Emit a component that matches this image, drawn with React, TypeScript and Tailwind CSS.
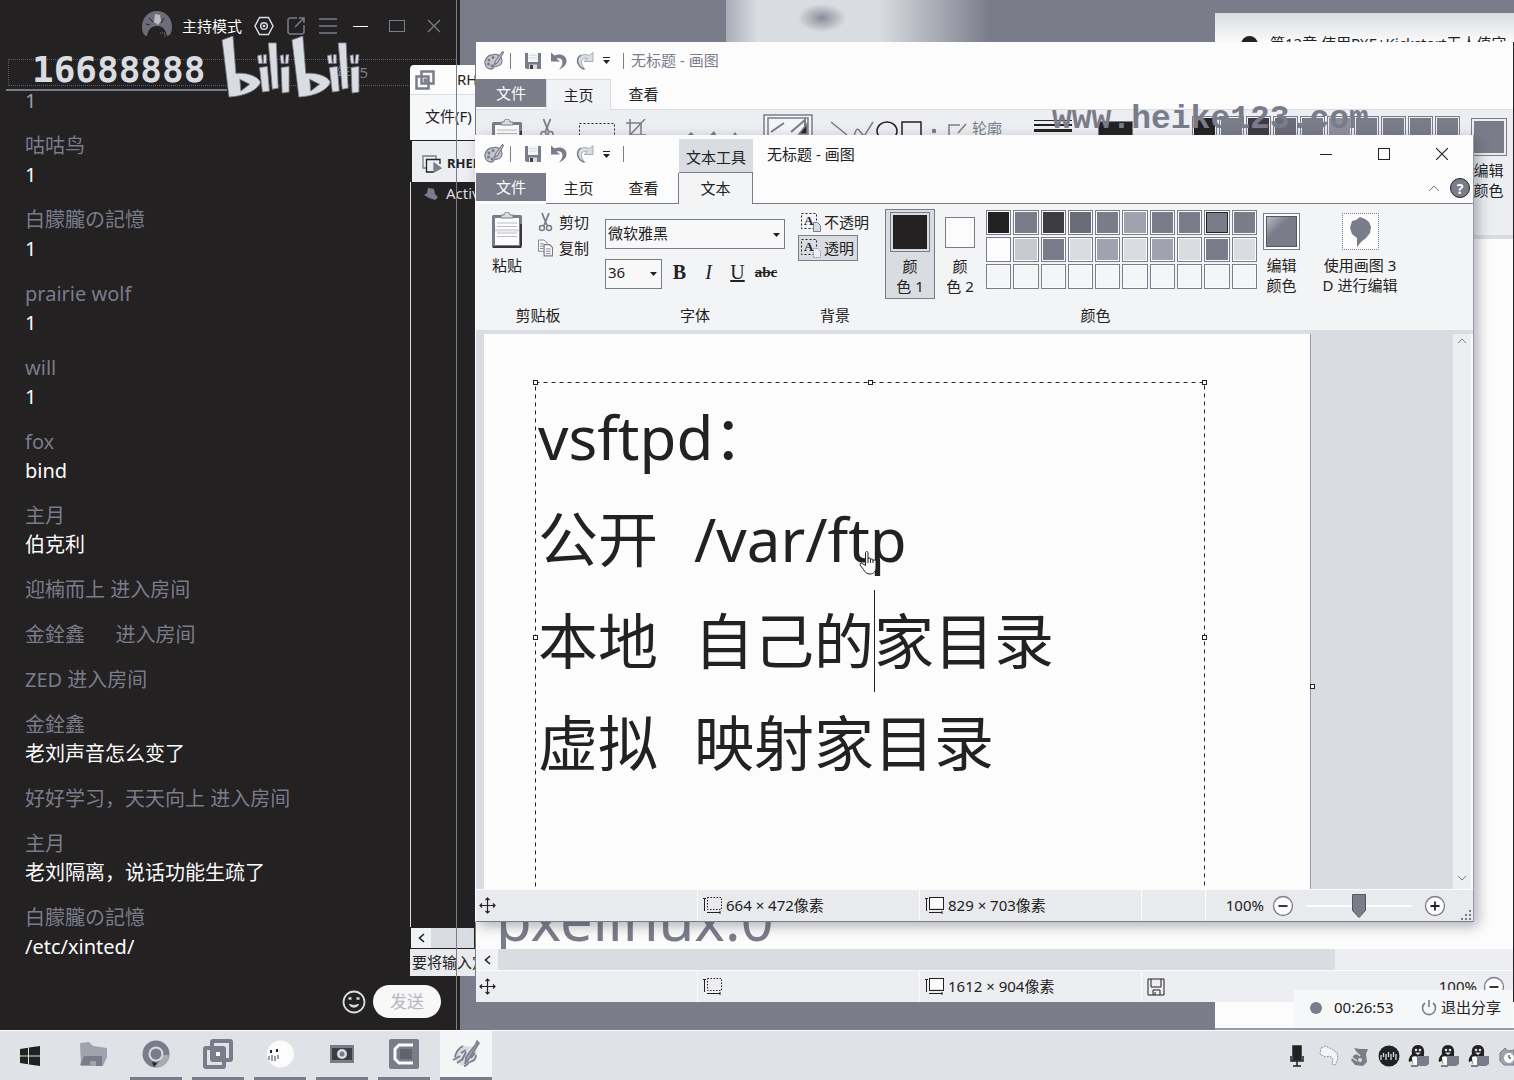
import React from "react";

type SvgProps = { className?: string };

const DARK = "#232122";
const GRAY = "#7b7c8a";
const LIGHT = "#d9dce1";

/* ---------- icons ---------- */

function PaletteIcon({ className = "" }: SvgProps) {
  return (
    <svg viewBox="0 0 20 20" className={className} aria-hidden="true">
      <path d="M7 4C3 5 .5 9 1 12.500c.5 3 3 5.500 6.500 5.500 2 0 2-2 3.500-2.500s4 .5 6-2.500c1.500-2.500 1-6-1-8S10.500 3 7 4z" fill="#c3c6ce" stroke={GRAY} strokeWidth="1.300" />
      <circle cx="5" cy="9" r="1.500" fill={GRAY} />
      <circle cx="9" cy="6.500" r="1.500" fill={GRAY} />
      <circle cx="4.500" cy="13" r="1.500" fill={GRAY} />
      <circle cx="8" cy="15" r="1.400" fill={GRAY} />
      <path d="M18.500 .5l-7 9.500-1.500 4 3.500-2.500 6-10z" fill={LIGHT} stroke={GRAY} strokeWidth="1.200" />
    </svg>
  );
}

function PaintAppIcon({ className = "" }: SvgProps) {
  return (
    <svg viewBox="0 0 28 28" className={className} aria-hidden="true">
      <path d="M11 6C6 8 2 13 3 18c1 5 5 8 9 8 3 0 3-3 5-4s6 0 7-4 1-8-1-11" fill={LIGHT} />
      <path d="M3 17c1-5 4-9 8-11M1 20l7-4M5 23l6-4M9 13l5-3M12 26c4 0 3-3 6-4s6-2 6-7" fill="none" stroke={GRAY} strokeWidth="1.800" />
      <path d="M25 1l2 2-8 13-6 8 1-7L24 4z" fill="#a0a2ad" stroke={GRAY} strokeWidth="1.500" />
      <path d="M10 20l4-8M19 18l4-5" stroke={GRAY} strokeWidth="1.800" />
    </svg>
  );
}

function SaveIcon({ className = "" }: SvgProps) {
  return (
    <svg viewBox="0 0 18 18" className={className} aria-hidden="true">
      <path d="M1 1h16v16H2.500L1 15.500z" fill={GRAY} />
      <path d="M4 1h10v9H4z" fill="#f4f5f7" />
      <path d="M5 3.500h8M5 6h8" stroke={LIGHT} />
      <path d="M5 12.500h8V17H5z" fill={LIGHT} />
      <path d="M6 13h3v4H6z" fill="#3d3c42" />
    </svg>
  );
}

function UndoIcon({ className = "" }: SvgProps) {
  return (
    <svg viewBox="0 0 18 18" className={className} aria-hidden="true">
      <path d="M1 .5v9h9L6.500 6.500c3.500-1 6 .5 6 4 0 2.500-1.500 4.500-3.500 7 5-2 7.500-5 7.500-8.500 0-5-5.500-8-12-5.500z" fill={GRAY} />
    </svg>
  );
}

function RedoIcon({ className = "" }: SvgProps) {
  return (
    <svg viewBox="0 0 18 18" className={className} aria-hidden="true">
      <path d="M17 .5v9H8l3.500-3c-3.500-1-6 .5-6 4 0 2.500 1.500 4.500 3.500 7-5-2-7.500-5-7.500-8.500 0-5 5.500-8 12-5.500z" fill={LIGHT} stroke="#a9abb5" />
      <path d="M5 3C2 5 1 8 2 11s3 5 6 6" fill="none" stroke={GRAY} strokeWidth="1.500" />
    </svg>
  );
}

function Caret({ className = "" }: SvgProps) {
  return (
    <svg viewBox="0 0 7 4" className={className} aria-hidden="true">
      <path d="M0 0h7L3.500 4z" fill={DARK} />
    </svg>
  );
}

function PasteIcon({ className = "" }: SvgProps) {
  return (
    <svg viewBox="0 0 30 36" className={className} aria-hidden="true">
      <rect x="0" y="3" width="30" height="33" rx="1.500" fill={GRAY} />
      <rect x="3" y="6" width="24" height="27" fill="#fcfcfc" />
      <path d="M9 6V3h3c0-4 6-4 6 0h3v3z" fill={LIGHT} stroke={GRAY} />
      <path d="M5 11h20M5 14.500h20M5 21h20M5 24.500h20" stroke="#b9bcc5" />
      <path d="M3 17h24v2.500H3z" fill={LIGHT} />
      <path d="M1 35h28M29 12v22" stroke={DARK} strokeWidth="1.500" />
    </svg>
  );
}

function ScissorsIcon({ className = "" }: SvgProps) {
  return (
    <svg viewBox="0 0 14 20" className={className} aria-hidden="true">
      <path d="M3.500 1l5 12.500M10.500 1l-5 12.500" stroke={GRAY} strokeWidth="1.800" fill="none" />
      <circle cx="3.500" cy="16" r="2.500" fill="none" stroke={GRAY} strokeWidth="1.500" />
      <circle cx="10.500" cy="16" r="2.500" fill="none" stroke={GRAY} strokeWidth="1.500" />
    </svg>
  );
}

function CopyIcon({ className = "" }: SvgProps) {
  return (
    <svg viewBox="0 0 16 18" className={className} aria-hidden="true">
      <path d="M.5.500h6l3 3v9h-9z" fill="#fcfcfc" stroke={GRAY} />
      <path d="M2 4.500h4M2 7h4M2 9.500h4" stroke={GRAY} />
      <path d="M6.500 5.500h6l3 3v9h-9z" fill="#fcfcfc" stroke={GRAY} strokeWidth="1.300" />
      <path d="M8.500 10h5M8.500 12.500h5M8.500 15h5" stroke={GRAY} />
    </svg>
  );
}

function TextBackIcon({ solid = false }: { solid?: boolean }) {
  return (
    <span className="relative block h-[19px] w-5 flex-none" aria-hidden="true">
      <svg viewBox="0 0 20 19" className="absolute inset-0 h-full w-full">
        <rect x=".5" y=".5" width="15" height="15" fill="none" stroke={DARK} strokeDasharray="2 2" />
        <path d="M12.500 9.500h4l3 3v6h-7z" fill={solid ? LIGHT : "#eceef1"} stroke={GRAY} strokeDasharray={solid ? "0" : "1 1"} />
      </svg>
      <span className="absolute left-[3px] top-0 font-['Liberation_Serif',serif] text-[13px] font-bold leading-4 text-[#232122]">A</span>
    </span>
  );
}

function MoveIcon({ className = "" }: SvgProps) {
  return (
    <svg viewBox="0 0 17 17" className={className} aria-hidden="true">
      <path d="M8.500 1v15M1 8.500h15M6.500 3l2-2 2 2M6.500 14l2 2 2-2M3 6.500l-2 2 2 2M14 6.500l2 2-2 2" fill="none" stroke={DARK} strokeWidth="1.200" />
    </svg>
  );
}

function SelectionSizeIcon({ className = "" }: SvgProps) {
  return (
    <svg viewBox="0 0 19 17" className={className} aria-hidden="true">
      <rect x="4.500" y=".5" width="14" height="12" fill="none" stroke={DARK} strokeDasharray="1.500 1.500" />
      <path d="M1.500 1v13M0 1.500h3M4 15.500h13M17 14v3" stroke={DARK} fill="none" />
    </svg>
  );
}

function CanvasSizeIcon({ className = "" }: SvgProps) {
  return (
    <svg viewBox="0 0 19 17" className={className} aria-hidden="true">
      <rect x="4.500" y=".5" width="14" height="12" fill="#fcfcfc" stroke={DARK} />
      <path d="M6 11.500h11" stroke={LIGHT} />
      <path d="M1.500 1v13M0 1.500h3M4 15.500h13M17 14v3" stroke={DARK} fill="none" />
    </svg>
  );
}

function RoundSign({ plus = false }: { plus?: boolean }) {
  return (
    <svg viewBox="0 0 22 22" className="h-[22px] w-[22px]" aria-hidden="true">
      <circle cx="11" cy="11" r="9.500" fill="#fcfcfc" stroke={GRAY} strokeWidth="1.300" />
      <path d={plus ? "M6.500 11h9M11 6.500v9" : "M6.500 11h9"} stroke={DARK} strokeWidth="1.800" />
    </svg>
  );
}

function PenguinIcon() {
  return (
    <svg viewBox="0 0 22 22" className="h-[22px] w-[22px]" aria-hidden="true">
      <path d="M4 9C3 3 6 0 10 0s7 3 6 9v4H4z" fill={DARK} />
      <path d="M4 9c-3 3-4 6-3 8l3-1 1 3 8-1V9z" fill={DARK} />
      <circle cx="8" cy="5" r="1.300" fill={LIGHT} />
      <circle cx="12" cy="5" r="1.300" fill={LIGHT} />
      <path d="M7 7.500h6l-3 2.500z" fill={LIGHT} />
      <path d="M4 12c2-1 5-1 6 1s0 6-2 7-4-2-4-8z" fill="#fcfcfc" />
      <path d="M9 11h12v8l-3 2H9z" fill={GRAY} />
      <path d="M3 21h7" stroke={GRAY} strokeWidth="2" />
    </svg>
  );
}

/* ---------- chat panel ---------- */

type Message = { name?: string; text?: string };

const messages: Message[] = [
  { text: "1" },
  { name: "咕咕鸟", text: "1" },
  { name: "白朦朧の記憶", text: "1" },
  { name: "prairie wolf", text: "1" },
  { name: "will", text: "1" },
  { name: "fox", text: "bind" },
  { name: "主月", text: "伯克利" },
  { name: "迎楠而上 进入房间" },
  { name: "金銓鑫\u3000  进入房间" },
  { name: "ZED 进入房间" },
  { name: "金銓鑫", text: "老刘声音怎么变了" },
  { name: "好好学习，天天向上 进入房间" },
  { name: "主月", text: "老刘隔离，说话功能生疏了" },
  { name: "白朦朧の記憶", text: "/etc/xinted/" },
];

function ChatPanel() {
  const iconButton = "flex h-8 w-8 items-center justify-center";
  return (
    <aside className="flex h-full w-[457px] flex-none flex-col border-r border-[#7b7c8a] bg-[#232122]">
      <header className="flex h-[52px] flex-none items-center pl-[142px]">
        <svg viewBox="0 0 30 30" className="h-[30px] w-[30px]" aria-hidden="true">
          <path d="M0 16C0 7 6 0 15 0s15 7 15 16c0 5-2 9-5 9-1-6-4-10-10-10S6 19 5 25c-3 0-5-4-5-9z" fill="#6c6d79" />
          <path d="M13 3l5 1 1 6-3 4-4-3z" fill="#b9bcc5" />
          <path d="M7 7l4 4M22 7l-3 5M4 13l4 1" stroke={DARK} />
          <path d="M18 22h5v4" fill="none" stroke={GRAY} strokeDasharray="1 1" />
        </svg>
        <span className="ml-[10px] text-[15px] leading-5 text-[#fcfcfc]">主持模式</span>
        <button className={"ml-[6px] " + iconButton} aria-label="设置">
          <svg viewBox="0 0 20 20" className="h-5 w-5" fill="none" stroke={LIGHT} strokeWidth="1.500">
            <path d="M5.500 1.500h9l4.500 8.500-4.500 8.500h-9L1 10z" />
            <circle cx="10" cy="10" r="3.300" />
            <circle cx="10" cy="10" r=".6" />
          </svg>
        </button>
        <button className={iconButton} aria-label="分享">
          <svg viewBox="0 0 20 20" className="h-5 w-5" fill="none" stroke={GRAY} strokeWidth="1.500">
            <path d="M11 2H3.500L2 3.500v13L3.500 18h13l1.500-1.500V9M13 2h5v5M18 2l-9 9" />
          </svg>
        </button>
        <button className={iconButton} aria-label="菜单">
          <svg viewBox="0 0 18 16" className="h-4 w-[18px]" stroke={GRAY} strokeWidth="1.600">
            <path d="M0 1h18M0 8h18M0 15h18" />
          </svg>
        </button>
        <button className={iconButton} aria-label="最小化">
          <span className="block h-px w-[15px] bg-[#fcfcfc]" />
        </button>
        <button className="flex h-8 w-[42px] items-center justify-center" aria-label="最大化">
          <span className="block h-3 w-4 border border-[#7b7c8a]" />
        </button>
        <button className={iconButton} aria-label="关闭">
          <svg viewBox="0 0 14 14" className="h-[14px] w-[14px]" stroke={GRAY} strokeWidth="1.300">
            <path d="M1 1l12 12M13 1L1 13" />
          </svg>
        </button>
      </header>
      <div className="flex h-[34px] flex-none flex-col justify-end pl-2">
        <div className="flex h-[27px] items-center justify-end border border-r-0 border-dotted border-[#5d5e69] pr-[88px] text-[15px] text-[#7b7c8a]">
          年15
        </div>
      </div>
      <ul className="flex flex-col gap-4 pl-[25px] text-[20px] leading-[29px]">
        {messages.map((m, i) => (
          <li key={i} className="flex flex-col">
            {m.name && <span className="whitespace-pre text-[#7b7c8a]">{m.name}</span>}
            {m.text && <span className={i === 0 ? "text-[#9a9ba6]" : "text-[#fcfcfc]"}>{m.text}</span>}
          </li>
        ))}
      </ul>
      <footer className="mt-auto flex items-center justify-end gap-[7px] pb-3 pr-[15px]">
        <button aria-label="表情">
          <svg viewBox="0 0 24 24" className="h-6 w-6" fill="none" stroke={LIGHT} strokeWidth="1.800">
            <circle cx="12" cy="12" r="10.500" />
            <path d="M7.500 14.500c1 3.500 8 3.500 9 0l-4.500 1z" fill={LIGHT} strokeWidth="1" />
            <path d="M6.500 8.500h3M14.500 8.500h3" strokeWidth="2.500" />
          </svg>
        </button>
        <button className="h-[33px] w-[68px] rounded-full bg-[#f8f8f9] text-[17px] text-[#b4b7bf]">发送</button>
      </footer>
    </aside>
  );
}

function BilibiliLogo({ className = "" }: SvgProps) {
  const half = (
    <>
      <path d="M0 4L11 0l3 38c9-1 22 2 25 9-3 8-15 14-32 15z" />
      <path d="M36 20l4-1 1 9-4 0zM42 19l3 0 0 9-3 0zM59 20l3-1 1 9-3 0zM65 19l3 0-1 9-3 0z" />
      <path d="M38 32l8-1 2 25-7 1zM47 7l8 0 2 46-6 1zM60 32l8-1 0 26-7 1z" />
    </>
  );
  return (
    <svg viewBox="0 0 142 63" className={className} role="img" aria-label="bilibili" fill={LIGHT} stroke={GRAY} strokeWidth=".8">
      {half}
      <g transform="translate(71 0)">{half}</g>
      <path d="M18 44l10 5-9 7zM89 44l10 5-9 7z" fill={DARK} />
    </svg>
  );
}

/* ---------- virtual machine window ---------- */

function VmWindow() {
  return (
    <section className="absolute bottom-[54px] left-[410px] top-[65px] flex w-[65px] flex-col overflow-hidden whitespace-nowrap rounded-tl bg-[#fcfcfc] text-[15px] text-[#232122]">
      <header className="flex h-[30px] flex-none items-center gap-[22px] border-b border-[#d9dce1] pl-[5px]">
        <svg viewBox="0 0 20 20" className="h-5 w-5 flex-none" fill="none" stroke={GRAY} strokeWidth="2.500">
          <rect x="6.500" y="1.500" width="12" height="12" />
          <rect x="1.500" y="6.500" width="12" height="12" />
          <rect x="9" y="9" width="3" height="3" fill={GRAY} strokeWidth="1" />
        </svg>
        <span>RHEL</span>
      </header>
      <div className="flex h-[45px] flex-none items-center bg-[#f6f7f8] pb-0.5 pl-[15px]">文件(F)</div>
      <div className="flex h-[42px] flex-none items-center gap-[5px] border-l-2 border-t border-[#232122] bg-[#eceef1] pl-[10px] pt-1">
        <svg viewBox="0 0 20 18" className="h-[18px] w-5 flex-none" fill="none" stroke={GRAY} strokeWidth="1.300">
          <path d="M4 13H1V1h13v3" />
          <path d="M12 17H4.500V4.500H18V9" stroke={DARK} />
          <path d="M12 8l7 5-7 4z" fill={GRAY} />
        </svg>
        <b className="text-[13px]">RHEL</b>
      </div>
      <div className="flex flex-1 items-start gap-2 border-l border-[#d9dce1] bg-[#232122] pl-[13px] text-[#d9dce1]">
        <svg viewBox="0 0 14 12" className="mt-[6px] h-3 w-[14px] flex-none" fill={GRAY}>
          <path d="M4 0l6 1 1 5 3 3-3 3-6-2-5-3 3-2z" />
        </svg>
        <span className="leading-[22px]">Activ</span>
      </div>
      <div className="flex h-[22px] flex-none items-center border border-[#232122] bg-[#d9dce1]">
        <button className="flex h-full w-5 items-center justify-center bg-[#f1f2f5]" aria-label="向左滚动">
          <svg viewBox="0 0 7 10" className="h-[10px] w-[7px]" fill="none" stroke={DARK} strokeWidth="1.600">
            <path d="M6 1L1.500 5 6 9" />
          </svg>
        </button>
      </div>
      <div className="flex h-[27px] flex-none items-center bg-[#e8eaed] pl-0.5">要将输入定</div>
    </section>
  );
}

/* ---------- paint ---------- */

function QuickAccess() {
  return (
    <div className="flex items-center pl-2">
      <PaletteIcon className="h-5 w-5" />
      <span className="ml-[6px] h-4 w-px bg-[#7b7c8a]" />
      <button className="ml-[13px]" aria-label="保存"><SaveIcon className="h-[18px] w-[18px]" /></button>
      <button className="ml-2" aria-label="撤消"><UndoIcon className="h-[18px] w-[18px]" /></button>
      <button className="ml-2" aria-label="重做"><RedoIcon className="h-[18px] w-[18px]" /></button>
      <button className="ml-[9px] flex flex-col items-center gap-0.5" aria-label="自定义快速访问工具栏">
        <span className="h-px w-[7px] bg-[#232122]" />
        <Caret className="h-1 w-[7px]" />
      </button>
      <span className="ml-[13px] h-4 w-px bg-[#7b7c8a]" />
    </div>
  );
}

const tabBase = "flex h-[31px] w-[65px] items-center justify-center";

function FileTab() {
  return <button className="h-7 w-[70px] flex-none bg-[#7b7c8a] text-[#fcfcfc]">文件</button>;
}

function StatusItem({ icon, children, className = "" }: { icon: React.ReactNode; children?: React.ReactNode; className?: string }) {
  return (
    <div className={"flex h-full items-center gap-1 border-l border-[#fcfcfc] pl-[5px] " + className}>
      {icon}
      <span>{children}</span>
    </div>
  );
}

function BackPaintWindow() {
  const swatches = ["bg-[#232122]", "bg-[#7b7c8a]", "bg-[#3d3c42]", "bg-[#6a6b77]", "bg-[#7b7c8a]", "bg-[#8f909c]", "bg-[#7b7c8a]", "bg-[#7b7c8a]", "bg-[#7b7c8a]", "bg-[#7b7c8a]"];
  return (
    <section className="absolute bottom-7 left-[475px] right-0 top-[42px] flex flex-col border-l border-r border-[#7b7c8a] border-r-[#232122] bg-[#fcfcfc] text-[15px] text-[#232122]">
      <header className="flex h-[37px] flex-none items-center">
        <QuickAccess />
        <span className="ml-[7px] text-[#7b7c8a]">无标题 - 画图</span>
      </header>
      <nav className="flex h-[31px] flex-none items-start border-b border-[#d9dce1]">
        <FileTab />
        <button className={tabBase + " border border-b-0 border-[#d9dce1] bg-[#f1f2f5]"}>主页</button>
        <button className={tabBase}>查看</button>
      </nav>
      <div className="flex h-[125px] flex-none items-start bg-[#eceef1] pl-4 pt-1">
        <PasteIcon className="mt-[5px] h-9 w-[30px]" />
        <ScissorsIcon className="ml-[18px] mt-1 h-5 w-[14px]" />
        <svg viewBox="0 0 36 26" className="ml-[25px] mt-[9px] h-[26px] w-9 flex-none" fill="none" stroke={DARK}>
          <rect x=".5" y=".5" width="35" height="25" strokeDasharray="2 2" />
        </svg>
        <svg viewBox="0 0 20 20" className="ml-[11px] mt-[5px] h-5 w-5 flex-none" fill="none" stroke={GRAY} strokeWidth="1.500">
          <path d="M0 4h15v16M4 0v16h16M4 16L19 0" />
        </svg>
        <svg viewBox="0 0 52 14" className="ml-[41px] mt-[16px] h-[14px] w-[52px] flex-none" fill={GRAY}>
          <path d="M0 6l4-4 4 4v8H0zM22 6l5-5 3 5v8h-8zM46 5l2-3 3 4v8h-5z" />
        </svg>
        <svg viewBox="0 0 50 50" className="ml-6 h-[50px] w-[50px] flex-none" fill="#f4f5f7" stroke={GRAY} strokeWidth="1.500">
          <rect x="1" y="1" width="48" height="48" />
          <rect x="5" y="4" width="40" height="42" />
          <path d="M8 18l13-9M28 18L42 6v14" strokeWidth="2" />
          <path d="M36 20l8-10v10z" fill={DARK} />
        </svg>
        <svg viewBox="0 0 106 22" className="ml-[17px] mt-[5px] h-[22px] w-[106px] flex-none" fill="none" stroke={GRAY} strokeWidth="1.500">
          <path d="M1 3l16 13M24 18c4-20 8 6 12-4l7-11" />
          <ellipse cx="57" cy="12" rx="10" ry="9" stroke={DARK} />
          <rect x="72" y="3" width="19" height="17" stroke={DARK} />
          <circle cx="104" cy="12" r="1.500" fill={GRAY} />
        </svg>
        <svg viewBox="0 0 20 14" className="ml-3 mt-[9px] h-[14px] w-5 flex-none" fill="none" stroke={GRAY} strokeWidth="1.500">
          <path d="M12 2H1v12M18 1l-8 9" />
        </svg>
        <span className="ml-1 mt-1 leading-5 text-[#7b7c8a]">轮廓</span>
        <div className="ml-8 mt-[6px] flex w-[38px] flex-col gap-[3px]">
          <span className="h-px bg-[#232122]" />
          <span className="h-0.5 bg-[#232122]" />
          <span className="h-[3px] bg-[#232122]" />
        </div>
        <span className="ml-[26px] mt-[7px] h-10 w-[35px] flex-none border border-[#7b7c8a] bg-[#232122]" />
        <span className="ml-6 mt-1 h-[30px] w-[22px] flex-none" />
        <div className="ml-[13px] mt-[2px] flex min-w-0 flex-1 gap-0.5">
          {swatches.map((c, i) => (
            <span key={i} className="h-[26px] w-[25px] flex-none border border-[#7b7c8a] p-px">
              <span className={"block h-full w-full " + c} />
            </span>
          ))}
        </div>
        <div className="mt-1 flex w-[49px] flex-none flex-col items-center">
          <span className="h-[38px] w-9 border border-[#7b7c8a] p-0.5"><span className="block h-full w-full bg-[#7b7c8a]" /></span>
          <span className="mt-1 w-8 text-center leading-5">编辑颜色</span>
        </div>
      </div>
      <div className="flex min-h-0 flex-1 flex-col justify-end overflow-hidden border-t-4 border-[#d9dce1] pl-5">
        <div className="h-[60px] text-[58px] leading-[60px] text-[#7b7c8a]">pxelinux.0</div>
      </div>
      <div className="flex h-[21px] flex-none bg-[#eceef1]">
        <button className="flex w-[22px] items-center justify-center bg-[#f1f2f5]" aria-label="向左滚动">
          <svg viewBox="0 0 7 10" className="h-[10px] w-[7px]" fill="none" stroke={DARK} strokeWidth="1.600">
            <path d="M6 1L1.500 5 6 9" />
          </svg>
        </button>
        <div className="mr-[178px] flex-1 bg-[#d9dce1]" />
      </div>
      <footer className="flex h-8 flex-none items-center border-t border-[#fcfcfc] bg-[#eceef1]">
        <div className="w-[221px] pl-[3px]"><MoveIcon className="h-[17px] w-[17px]" /></div>
        <StatusItem className="w-[222px]" icon={<SelectionSizeIcon className="h-[17px] w-[19px]" />} />
        <StatusItem className="w-[222px]" icon={<CanvasSizeIcon className="h-[17px] w-[19px]" />}>1612 × 904像素</StatusItem>
        <StatusItem
          icon={
            <svg viewBox="0 0 18 18" className="h-[18px] w-[18px]" fill="none" stroke={DARK}>
              <path d="M1 1h16v16H1zM4 1v8h10V1M6 17v-5h7v5M8 14v3" />
            </svg>
          }
        />
        <span className="ml-auto mr-[6px]">100%</span>
        <button className="mr-[8px]" aria-label="缩小"><RoundSign /></button>
      </footer>
    </section>
  );
}

const palette: string[][] = [
  ["bg-[#232122]", "bg-[#7b7c8a]", "bg-[#3d3c42]", "bg-[#6a6b77]", "bg-[#7b7c8a]", "bg-[#a0a2ad]", "bg-[#7b7c8a]", "bg-[#7b7c8a]", "bg-[#7b7c8a] border border-[#232122]", "bg-[#7b7c8a]"],
  ["bg-[#fcfcfc]", "bg-[#c6c9d0]", "bg-[#7b7c8a]", "bg-[#d9dce1]", "bg-[#a0a2ad]", "bg-[#d9dce1]", "bg-[#a0a2ad]", "bg-[#d9dce1]", "bg-[#7b7c8a]", "bg-[#d9dce1]"],
  ["bg-[#f4f5f7]", "bg-[#f4f5f7]", "bg-[#f4f5f7]", "bg-[#f4f5f7]", "bg-[#f4f5f7]", "bg-[#f4f5f7]", "bg-[#f4f5f7]", "bg-[#f4f5f7]", "bg-[#f4f5f7]", "bg-[#f4f5f7]"],
];

function GroupLabel({ children }: { children: React.ReactNode }) {
  return <div className="text-center leading-5">{children}</div>;
}

function Ribbon() {
  const group = "flex flex-none flex-col";
  return (
    <div className="flex h-[126px] flex-none bg-[#f3f4f6]">
      <div className={group + " w-[124px]"}>
        <div className="flex h-[101px] pl-4 pt-2">
          <button className="flex w-[30px] flex-col items-center gap-[7px] self-start whitespace-nowrap">
            <PasteIcon className="h-9 w-[30px]" />
            <span className="leading-5">粘贴</span>
          </button>
          <div className="ml-4 flex flex-col gap-[6px]">
            <button className="flex h-5 items-center gap-[6px]"><ScissorsIcon className="h-5 w-[15px]" />剪切</button>
            <button className="flex h-5 items-center gap-[6px]"><CopyIcon className="h-[18px] w-[15px]" />复制</button>
          </div>
        </div>
        <GroupLabel>剪贴板</GroupLabel>
      </div>
      <div className={group + " ml-[5px] w-[180px]"}>
        <div className="h-[101px] pt-[15px]">
          <div className="relative">
            <select aria-label="字体" className="h-[30px] w-full appearance-none border border-[#7b7c8a] bg-[#f8f8f9] pb-0.5 pl-[2px] text-[15px]">
              <option>微软雅黑</option>
            </select>
            <Caret className="pointer-events-none absolute right-[5px] top-[14px] h-1 w-[7px]" />
          </div>
          <div className="mt-[10px] flex items-start">
            <div className="relative w-[57px]">
              <select aria-label="字号" className="h-[30px] w-full appearance-none border border-[#7b7c8a] bg-[#f8f8f9] pb-[3px] pl-[2px] text-[15px]">
                <option>36</option>
              </select>
              <Caret className="pointer-events-none absolute right-[5px] top-[13px] h-1 w-[7px]" />
            </div>
            <div className="ml-[3px] flex flex-1 font-['Liberation_Serif',serif] text-[20px] leading-[26px]">
              <button className="w-[29px] font-bold">B</button>
              <button className="w-[29px] italic">I</button>
              <button className="w-[29px] underline">U</button>
              <button className="w-7 text-[15px] font-bold line-through">abc</button>
            </div>
          </div>
        </div>
        <GroupLabel>字体</GroupLabel>
      </div>
      <div className={group + " ml-[13px] w-[74px] whitespace-nowrap"}>
        <div className="flex h-[101px] flex-col items-start pt-[5px]">
          <button className="flex h-[26px] items-center gap-[3px] pl-[3px]"><TextBackIcon solid />不透明</button>
          <button className="flex h-[26px] w-[60px] items-center gap-[3px] border border-[#7b7c8a] bg-[#d9dce1] pl-[2px]"><TextBackIcon />透明</button>
        </div>
        <GroupLabel>背景</GroupLabel>
      </div>
      <div className={group + " ml-[13px] w-[421px]"}>
        <div className="flex h-[101px] items-start pt-[5px]">
          <button className="flex h-[90px] w-[50px] flex-col items-center border border-[#7b7c8a] bg-[#d9dce1] pt-0.5">
            <span className="block h-10 w-10 border border-[#7b7c8a] p-0.5"><span className="block h-full w-full bg-[#232122]" /></span>
            <span className="mt-1 block leading-5">颜<br />色 1</span>
          </button>
          <button className="flex h-[90px] w-[50px] flex-col items-center pt-2">
            <span className="block h-[31px] w-[30px] border border-[#7b7c8a] bg-[#fcfcfc]" />
            <span className="mt-2 block leading-5">颜<br />色 2</span>
          </button>
          <div className="ml-px grid w-[271px] grid-cols-10 gap-0.5 pt-px">
            {palette.flat().map((c, i) => (
              <button key={i} aria-label={"颜色 " + (i + 1)} className="h-[25px] border border-[#7b7c8a] bg-[#fcfcfc] p-px">
                <span className={"block h-full w-full " + c} />
              </button>
            ))}
          </div>
          <button className="flex w-[49px] flex-col items-center pt-1">
            <span className="block h-[37px] w-[37px] border border-[#7b7c8a] bg-[#fcfcfc] p-0.5">
              <span className="block h-full w-full border border-[#55565f] bg-linear-to-br from-[#b9bcc5] via-[#7b7c8a] via-40% to-[#7b7c8a]" />
            </span>
            <span className="mt-[5px] block w-8 leading-5">编辑颜色</span>
          </button>
        </div>
        <GroupLabel>颜色</GroupLabel>
      </div>
      <button className="flex w-[108px] flex-none flex-col items-center self-start pt-[9px]">
        <span className="flex h-[37px] w-[37px] items-center justify-center border border-dotted border-[#7b7c8a] bg-[#fcfcfc]">
          <svg viewBox="0 0 22 30" className="h-[30px] w-[22px]" fill={GRAY} aria-hidden="true">
            <path d="M3 4l4-1 4-3 5 2 4 3 2 5-1 6-4 5-5 4-4 5v-9l-5-4-2-6z" />
          </svg>
        </span>
        <span className="mt-[5px] block whitespace-nowrap leading-5">使用画图 3<br />D 进行编辑</span>
      </button>
    </div>
  );
}

function Handle({ className }: { className: string }) {
  return <span className={"absolute h-[5px] w-[5px] border border-[#232122] bg-[#fcfcfc] " + className} />;
}

function Canvas() {
  return (
    <div className="flex min-h-0 flex-1 overflow-hidden bg-[#d9dce1] pt-1">
      <div className="min-w-0 flex-1 overflow-hidden pl-2">
        <div className="relative h-[703px] w-[827px] border-r border-[#9a9ba6] bg-[#fcfcfc]">
          <Handle className="-right-[5px] top-[350px]" />
          <div role="textbox" aria-multiline="true" tabIndex={0} className="absolute left-[51px] top-12 h-[508px] w-[670px] text-[60px] leading-[102px] text-[#232122]">
            <svg className="absolute inset-0 h-full w-full" aria-hidden="true">
              <rect x=".5" y=".5" width="669" height="507" fill="none" stroke={DARK} strokeDasharray="4 4" />
            </svg>
            <Handle className="-left-0.5 -top-0.5" />
            <Handle className="-right-0.5 -top-0.5" />
            <Handle className="-top-0.5 left-[333px]" />
            <Handle className="-left-0.5 top-[253px]" />
            <Handle className="-right-0.5 top-[253px]" />
            <div className="flex flex-col whitespace-nowrap pl-[3px] pt-1">
              <p>vsftpd：</p>
              <p className="flex gap-9"><span>公开</span><span>/var/ftp</span></p>
              <p className="flex gap-9">
                <span>本地</span>
                <span className="relative">自己的家目录<span className="absolute left-[180px] top-0 h-[102px] w-px bg-[#232122]" /></span>
              </p>
              <p className="flex gap-9"><span>虚拟</span><span>映射家目录</span></p>
            </div>
            <svg viewBox="0 0 18 24" className="absolute left-[324px] top-[169px] h-6 w-[18px]" fill="#fcfcfc" stroke={DARK} aria-hidden="true">
              <path d="M6.500 14.500V2c0-2 2.500-2 2.500 0v6c0-1.500 2.500-1.500 2.500 0v1c0-1.500 2.500-1.500 2.500 0v1c0-1.500 3-1.500 3 .5V16c0 4-2 7-6 7s-5-2-6.500-4.500L1 14c-.5-2 1.500-2.500 3-1z" />
              <path d="M9 8v4M11.500 9v3M14 10v2" />
            </svg>
          </div>
        </div>
      </div>
      <div className="flex w-5 flex-none flex-col items-center justify-between border-r-2 border-[#fcfcfc] bg-[#eceef1] py-1">
        <svg viewBox="0 0 10 6" className="h-[6px] w-[10px]" fill="none" stroke={GRAY}><path d="M1 5l4-4 4 4" /></svg>
        <svg viewBox="0 0 10 6" className="mb-1 h-[6px] w-[10px]" fill="none" stroke={GRAY}><path d="M1 1l4 4 4-4" /></svg>
      </div>
    </div>
  );
}

function FrontPaintWindow() {
  const control = "flex h-9 w-[58px] items-center justify-center";
  return (
    <section className="absolute bottom-[108px] left-[475px] right-10 top-[135px] flex flex-col border-l border-r border-[#fcfcfc] border-r-[#9a9ba6] bg-[#fcfcfc] text-[15px] text-[#232122] shadow-[4px_4px_12px_rgba(60,62,75,0.4)]">
      <header className="flex h-[38px] flex-none items-center">
        <QuickAccess />
        <div className="ml-[55px] mt-1 flex h-[34px] w-[74px] items-center justify-center self-start border-b border-[#7b7c8a] bg-[#d9dce1] pt-[3px]">文本工具</div>
        <h1 className="ml-[14px]">无标题 - 画图</h1>
        <div className="ml-auto mr-0.5 flex">
          <button className={control} aria-label="最小化"><span className="block h-px w-3 bg-[#232122]" /></button>
          <button className={control} aria-label="最大化"><span className="block h-3 w-3 border border-[#232122]" /></button>
          <button className={control} aria-label="关闭">
            <svg viewBox="0 0 12 12" className="h-3 w-3" stroke={DARK} strokeWidth="1.200"><path d="M0 0l12 12M12 0L0 12" /></svg>
          </button>
        </div>
      </header>
      <nav className="flex h-[31px] flex-none items-start">
        <FileTab />
        <div className="flex h-full w-[132px] border-b border-[#7b7c8a]">
          <button className={tabBase}>主页</button>
          <button className={tabBase}>查看</button>
        </div>
        <button className="flex h-full w-[75px] items-center justify-center border-l border-r border-[#7b7c8a] bg-[#f3f4f6]">文本</button>
        <div className="flex h-full flex-1 items-center justify-end gap-[10px] border-b border-[#7b7c8a] pr-[3px]">
          <button aria-label="折叠功能区">
            <svg viewBox="0 0 12 7" className="h-[7px] w-3" fill="none" stroke={GRAY}><path d="M1 6l5-5 5 5" /></svg>
          </button>
          <button aria-label="帮助" className="flex h-5 w-5 items-center justify-center rounded-full border border-[#232122] bg-[#7b7c8a] text-[14px] font-bold text-[#fcfcfc]">?</button>
        </div>
      </nav>
      <Ribbon />
      <Canvas />
      <footer className="flex h-[33px] flex-none items-center border-b border-t border-[#fcfcfc] border-b-[#7b7c8a] bg-[#e8eaed]">
        <div className="w-[221px] pl-[3px]"><MoveIcon className="h-[17px] w-[17px]" /></div>
        <StatusItem className="w-[222px]" icon={<SelectionSizeIcon className="h-[17px] w-[19px]" />}>664 × 472像素</StatusItem>
        <StatusItem className="w-[222px]" icon={<CanvasSizeIcon className="h-[17px] w-[19px]" />}>829 × 703像素</StatusItem>
        <StatusItem className="w-[64px]" icon={null} />
        <div className="flex h-full flex-1 items-center justify-end border-l border-[#fcfcfc]">
          <span>100%</span>
          <button className="ml-2" aria-label="缩小"><RoundSign /></button>
          <div className="relative ml-3 h-6 w-[106px]">
            <span className="absolute left-0 right-0 top-[11px] h-0.5 bg-[#fcfcfc]" />
            <input type="range" aria-label="缩放" className="absolute inset-0 h-full w-full opacity-0" />
            <svg viewBox="0 0 14 24" className="pointer-events-none absolute left-[46px] top-0 h-6 w-[14px]"><path d="M.5.500h13v16l-6.500 7-6.500-7z" fill={GRAY} stroke="#55565f" /></svg>
          </div>
          <button className="ml-3" aria-label="放大"><RoundSign plus /></button>
          <svg viewBox="0 0 12 12" className="ml-[14px] mr-px h-3 w-3 self-end" fill={GRAY}>
            <path d="M9 1h2v2H9zM9 5h2v2H9zM9 9h2v2H9zM5 5h2v2H5zM5 9h2v2H5zM1 9h2v2H1z" />
          </svg>
        </div>
      </footer>
    </section>
  );
}

/* ---------- taskbar ---------- */

const taskIcons: { label: string; icon: React.ReactNode; open: boolean; active?: boolean }[] = [
  {
    label: "文件资源管理器", open: false,
    icon: <svg viewBox="0 0 28 26" className="h-[26px] w-7"><path d="M0 2l9-1 4 4 14 2v9l-4 9H1z" fill="#a0a2ad" /><path d="M4 15h18v10h-6v-5h-6v4H0z" fill={GRAY} /></svg>,
  },
  {
    label: "Chrome", open: true,
    icon: <svg viewBox="0 0 28 28" className="h-7 w-7"><circle cx="14" cy="14" r="13.500" fill={GRAY} /><path d="M13 27.500L22 15l5 0c0 7-6 12.500-14 12.500z" fill="#a9abb5" /><path d="M10 22l5 1-3 4z" fill={DARK} /><circle cx="14" cy="14" r="7.500" fill={LIGHT} /><circle cx="14" cy="14" r="5.500" fill={GRAY} /></svg>,
  },
  {
    label: "VMware", open: true,
    icon: <svg viewBox="0 0 30 30" className="h-[30px] w-[30px]" fill="none" stroke={GRAY} strokeWidth="4"><rect x="9" y="2" width="19" height="19" rx="1" /><rect x="2" y="9" width="19" height="19" rx="1" /><rect x="12" y="12" width="6" height="6" strokeWidth="2" fill="#fcfcfc" /></svg>,
  },
  {
    label: "聊天", open: true,
    icon: <svg viewBox="0 0 28 28" className="h-7 w-7"><circle cx="14.500" cy="14" r="13.500" fill="#fcfcfc" /><path d="M4 10h2v3H4zM10 9h2v3h-2z" fill={DARK} /><path d="M3 16v4M6 15v6M9 16v5M12 15v4" stroke={GRAY} strokeWidth="1.500" /></svg>,
  },
  {
    label: "截图", open: true,
    icon: <svg viewBox="0 0 24 18" className="h-[18px] w-6"><path d="M0 0h24v18H0z" fill={GRAY} /><path d="M2 3h20v12H2z" fill="#3d3c42" /><circle cx="12" cy="9" r="5" fill={LIGHT} /><circle cx="12" cy="9" r="2.500" fill={GRAY} /></svg>,
  },
  {
    label: "Camtasia", open: true,
    icon: <svg viewBox="0 0 30 30" className="h-[30px] w-[30px]"><rect width="30" height="30" rx="2" fill={GRAY} /><path d="M24 6H10L6 10v10l4 4h14" fill="none" stroke="#fcfcfc" strokeWidth="3" /><path d="M11 10h12v10H11z" fill="#62636e" /></svg>,
  },
  { label: "画图", open: true, active: true, icon: <PaintAppIcon className="h-7 w-7" /> },
];

function Taskbar() {
  return (
    <nav className="flex h-[50px] flex-none items-stretch border-t border-[#fcfcfc] bg-[#dfe2e6]">
      <button className="flex w-[63px] items-center pl-5" aria-label="开始">
        <svg viewBox="0 0 20 20" className="h-5 w-5" fill={DARK}><path d="M0 3l8-1.200V9.500H0zM9 1.600L20 0v9.500H9zM0 10.500h8v7.700L0 17zM9 10.500h11V20L9 18.400z" /></svg>
      </button>
      {taskIcons.map((t) => (
        <button key={t.label} aria-label={t.label} className="flex w-[62px] flex-col items-center px-[5px]">
          <span className={"flex w-full flex-1 items-center justify-center " + (t.active ? "bg-[#f4f5f7]" : "")}>{t.icon}</span>
          <span className={"h-[3px] w-full " + (t.open ? "bg-[#7b7c8a]" : "")} />
        </button>
      ))}
      <div className="ml-auto flex items-center gap-2 overflow-hidden">
        <svg viewBox="0 0 14 22" className="mr-[6px] h-[22px] w-[14px]" fill="none" stroke={DARK} strokeWidth="1.500"><rect x="3" y="1" width="8" height="14" fill={DARK} /><path d="M1 11v5h12v-5M7 16v5M3 21h8" /></svg>
        <svg viewBox="0 0 22 22" className="h-[22px] w-[22px]" fill="#f4f5f7" stroke="#8f909c"><path d="M3 3l4-2 7 3 5 4 1 6-3 6-3-1 1-5-3-3-5 1-5-3z" strokeDasharray="2 1" /></svg>
        <svg viewBox="0 0 22 22" className="h-[22px] w-[22px]" fill={GRAY}><path d="M6 3l6 1 8 0-2 5 1 8-4 4-8-1-4-5 3-5 4-1z" /><path d="M2 11l7 5M9 8l3 3" stroke={LIGHT} strokeWidth="1.500" /><circle cx="12" cy="15" r="2" fill={LIGHT} /></svg>
        <svg viewBox="0 0 22 22" className="h-[22px] w-[22px]"><circle cx="11" cy="11" r="10.500" fill={DARK} /><path d="M3 10v5M5.500 8v4M8 9v6M10.500 7v5M13 9v6M15.500 7v5M18 9v6" stroke={LIGHT} strokeWidth="1.300" /></svg>
        <PenguinIcon />
        <PenguinIcon />
        <PenguinIcon />
        <svg viewBox="0 0 16 22" className="h-[22px] w-4"><path d="M2 8l5-5 3 3 6-1v15H6l-4-4z" fill="#a0a2ad" stroke={GRAY} /><circle cx="11" cy="13" r="5" fill="#fcfcfc" /><path d="M11 10v3h2" stroke={DARK} fill="none" /></svg>
      </div>
    </nav>
  );
}

/* ---------- page ---------- */

export default function App() {
  return (
    <div className="flex h-screen flex-col overflow-hidden font-['Noto_Sans','Noto_Sans_CJK_SC',sans-serif] text-[15px]">
      <main className="relative flex min-h-0 flex-1 overflow-hidden bg-[#7b7c8a]">
        <ChatPanel />
        <div className="w-[3px] flex-none bg-[#232122]" />

        <div className="absolute left-[726px] top-0 h-[42px] w-[264px] bg-[radial-gradient(ellipse_24px_14px_at_96px_18px,#8a8b98,transparent),linear-gradient(to_right,#a9abb5,#d9dce1_12%,#d9dce1_58%,#7b7c8a)]" />
        <section className="absolute bottom-0 right-0 top-[13px] w-[299px] border-b-2 border-[#9a9ba6] bg-linear-to-b from-[#d9dce1] to-[#fcfcfc] to-3%">
          <header className="flex h-10 items-end gap-3 pl-[26px] leading-5">
            <span className="h-[17px] w-[17px] flex-none rounded-full bg-[#232122]" />
            <span className="truncate text-[#232122]">第12章 使用PXE+Kickstart无人值守</span>
          </header>
        </section>

        <VmWindow />
        <span className="absolute bottom-0 left-[456px] top-0 w-px bg-[#7b7c8a]" />
        <BackPaintWindow />
        <div className="absolute left-[1052px] top-[101px] font-['Liberation_Mono',monospace] text-[33px] font-bold leading-[38px] text-[#7b7c8a]">www.heike123.com</div>
        <FrontPaintWindow />

        <div className="absolute bottom-[3px] right-px flex h-[37px] w-[219px] items-center bg-[#f6f7f8] pb-0.5 pl-4 text-[#232122]">
          <span className="h-3 w-3 rounded-full bg-[#7b7c8a]" />
          <time className="ml-3">00:26:53</time>
          <button className="ml-auto mr-3 flex items-center gap-1">
            <svg viewBox="0 0 16 16" className="h-4 w-4" fill="none" stroke={GRAY} strokeWidth="1.600"><path d="M4 3a6.500 6.500 0 1 0 8 0M8 0v7" /></svg>
            退出分享
          </button>
        </div>

        <div className="absolute left-[6px] top-[50px] w-[221px] border-b-2 border-[#7b7c8a] pl-[26px] font-['DejaVu_Sans_Mono',monospace] text-[36px] font-bold leading-[39px] text-[#d9dce1]">16688888</div>
        <BilibiliLogo className="absolute left-[221px] top-9 h-[62px] w-[142px]" />
      </main>
      <Taskbar />
    </div>
  );
}
